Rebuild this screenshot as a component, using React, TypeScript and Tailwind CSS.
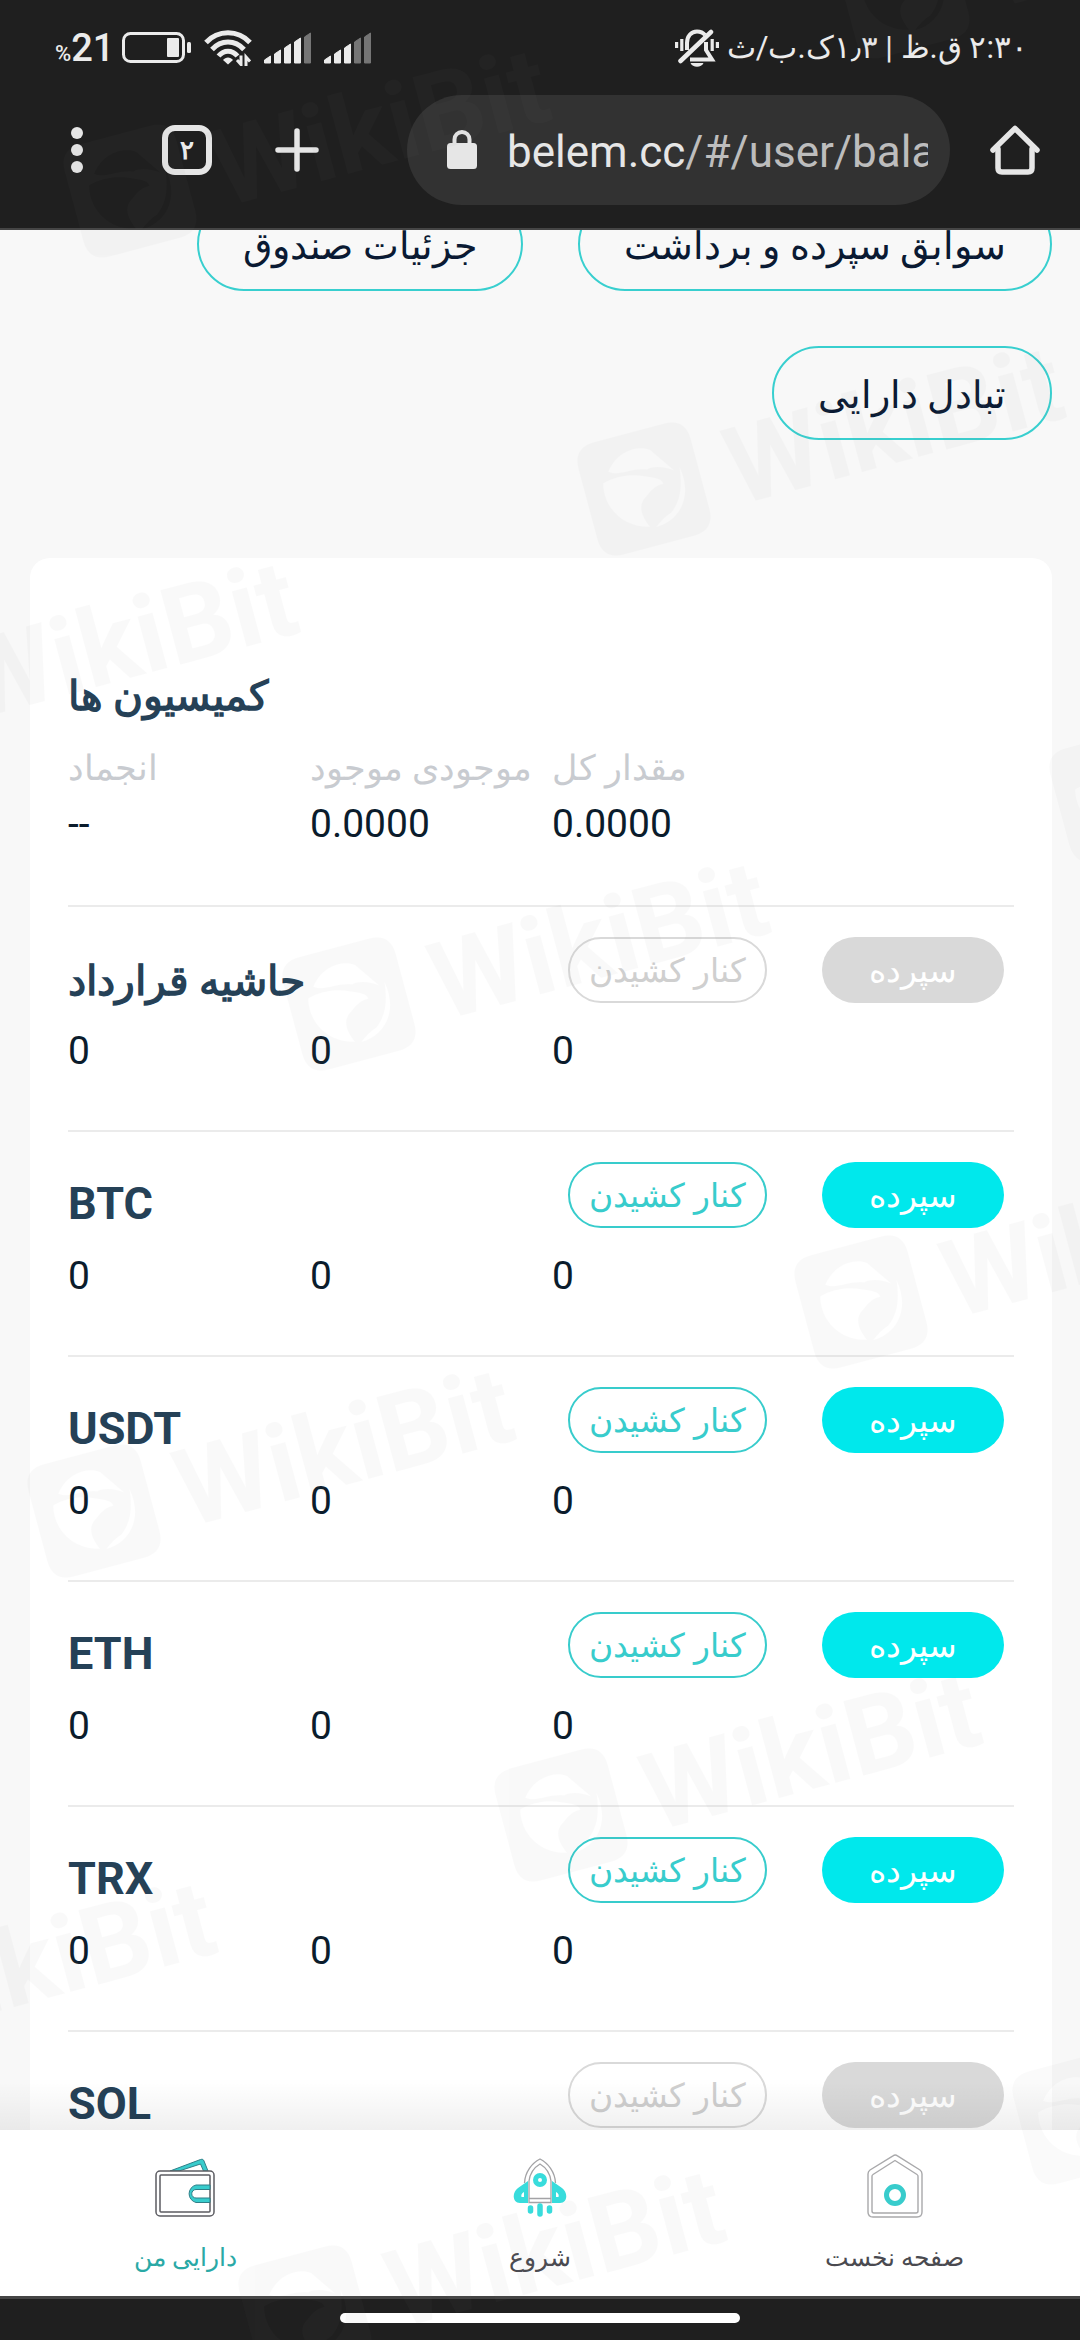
import type { ReactNode } from "react";

type Row = { name: string; rtl?: boolean; enabled: boolean };

const rows: Row[] = [
  { name: "حاشیه قرارداد", rtl: true, enabled: false },
  { name: "BTC", enabled: true },
  { name: "USDT", enabled: true },
  { name: "ETH", enabled: true },
  { name: "TRX", enabled: true },
  { name: "SOL", enabled: false },
];

function BatteryIcon() {
  return (
    <svg width="70" height="32" viewBox="0 0 70 32" fill="none" aria-hidden="true">
      <rect x="1.5" y="1.5" width="60" height="28" rx="7" stroke="#ebebeb" strokeWidth="3" />
      <rect x="45" y="6" width="12" height="19" rx="1" fill="#ebebeb" />
      <rect x="65" y="10" width="4" height="11" rx="1.5" fill="#ebebeb" />
    </svg>
  );
}

function WifiIcon() {
  return (
    <svg width="48" height="36" viewBox="0 0 48 36" fill="none" aria-hidden="true">
      <g stroke="#ebebeb" strokeWidth="5">
        <path d="M2 12.500C14 -.5 34 -.5 46 12.500" />
        <path d="M8 19.500C17 9.500 31 9.500 40 19.500" />
        <path d="M14.500 26C20 19.500 28 19.500 33.500 26" />
      </g>
      <path d="M24 34.500l-5-4.500c2.500-3.500 7.500-3.500 10 0z" fill="#ebebeb" />
      <path d="M33 30l4 4.500v-9M42 36v-9l4 4.500" stroke="#ebebeb" strokeWidth="3" />
    </svg>
  );
}

function SignalIcon({ lit }: { lit: number }) {
  const tops = [24, 18, 12, 6, 1];
  return (
    <svg width="48" height="32" viewBox="0 0 48 32" aria-hidden="true">
      {tops.map((top, i) => (
        <path
          key={top}
          d={`M${i * 10 + 0.5} 31V${top + 4}L${i * 10 + 6.5} ${top}V31Z`}
          fill={i < lit ? "#ebebeb" : "#757575"}
          stroke={i < lit ? "#ebebeb" : "#757575"}
          strokeWidth="1"
          strokeLinejoin="round"
        />
      ))}
    </svg>
  );
}

function MutedBellIcon() {
  return (
    <svg width="44" height="38" viewBox="0 0 44 38" fill="none" aria-hidden="true">
      <g stroke="#ebebeb" strokeWidth="3.200">
        <path d="M1.600 13v6M6.800 10v12M37.200 10v12M42.400 13v6" />
        <path d="M12 21V14c0-6.500 4-11.500 10-11.500 3.500 0 6 1 8 3.500M31 13v8l6 9.500H15" strokeWidth="4" />
        <path d="M5.500 32L36 3" strokeWidth="4.500" strokeLinecap="round" />
      </g>
      <path d="M15.500 34h13c-2 5-11 5-13 0z" fill="#ebebeb" />
    </svg>
  );
}

function WalletIcon() {
  return (
    <svg width="60" height="60" viewBox="0 0 60 60" fill="none" aria-hidden="true">
      <path d="M15 13L45.500 1.500c2-.6 3 0 3.500 1.500L53 13h-4.500l-3-7L24 13z" fill="#38cccc" stroke="#2f7f88" strokeWidth="1" strokeLinejoin="round" />
      <rect x="1" y="13" width="58" height="45" rx="4" fill="#fff" stroke="#5c5c62" strokeWidth="1.500" />
      <rect x="5" y="17" width="50" height="37" rx="1" stroke="#5c5c62" strokeWidth="1.500" />
      <path d="M55 27H41a9 9 0 0 0 0 17.500h14v-4.500H41a4.200 4.200 0 0 1 0-8.500h14z" fill="#38cccc" stroke="#2f7f88" strokeWidth="1" />
    </svg>
  );
}

function RocketIcon() {
  return (
    <svg width="54" height="60" viewBox="0 0 54 60" fill="none" aria-hidden="true">
      <path d="M15 23L5 30c-6 4-6 15 2 15h8zM39 23l10 7c6 4 6 15-2 15h-8z" fill="#38dcdc" />
      <path d="M11 34v5H8.500q-1-3 2.500-5zM43 34v5h2.500q1-3-2.500-5z" fill="#fff" />
      <path d="M16 43V22C17 15 23 9 27 6c4 3 10 9 11 16v21z" fill="#fff" />
      <path d="M11.500 25C12 14 19 5 27 1c8 4 15 13 15.500 24" stroke="#a3a3a6" strokeWidth="1.300" />
      <path d="M16 40.500V23C17 15 22 9 27 6c5 3 10 9 11 17v17.500zM16 40.500v4h22v-4" stroke="#a3a3a6" strokeWidth="1.300" />
      <circle cx="27" cy="22" r="4.500" stroke="#38dcdc" strokeWidth="5" />
      <path d="M27 48v8M17.500 50v3M36.500 50v3" stroke="#38dcdc" strokeWidth="5.500" strokeLinecap="round" />
    </svg>
  );
}

function HomeTabIcon() {
  return (
    <svg width="56" height="64" viewBox="0 0 56 64" fill="none" aria-hidden="true">
      <path d="M26 1.800a4 4 0 0 1 4.500 0L53 16c1.500 1 2 2 2 4v38c0 3-2 5-5 5H6c-3 0-5-2-5-5V20c0-2 .5-3 2-4z" stroke="#a9a9ab" strokeWidth="1.400" />
      <path d="M28 6.500L50 20.500a2 2 0 0 1 1 2V57q0 2-2 2H7q-2 0-2-2V22.500a2 2 0 0 1 1-2z" stroke="#a9a9ab" strokeWidth="1.400" />
      <circle cx="28" cy="41" r="8.500" stroke="#38cccc" strokeWidth="5" />
    </svg>
  );
}

function BrowserHomeIcon() {
  return (
    <svg width="50" height="50" viewBox="0 0 50 50" fill="none" stroke="#e6e6e6" strokeWidth="5.500" strokeLinecap="round" strokeLinejoin="round" aria-hidden="true">
      <path d="M3 25L25 3.500 47 25" />
      <path d="M8 24v19q0 4 4 4h26q4 0 4-4V24" />
    </svg>
  );
}

function LockIcon() {
  return (
    <svg width="30" height="40" viewBox="0 0 30 40" fill="none" aria-hidden="true">
      <path d="M7.500 15V9.500a7.500 7.500 0 0 1 15 0V15" stroke="#e6e6e6" strokeWidth="4" />
      <rect y="13" width="30" height="26" rx="3.500" fill="#e6e6e6" />
    </svg>
  );
}

function Pill({ children }: { children: ReactNode }) {
  return (
    <button type="button" className="flex h-[94px] items-center rounded-full border-2 border-[#38cfcf] px-11 pt-1 text-[38px] leading-none text-[#0a1a33]">
      {children}
    </button>
  );
}

function AssetRow({ row }: { row: Row }) {
  return (
    <section className="flex h-[225px] flex-col border-t-2 border-[#ebebeb]">
      <div className="flex items-start pt-[30px]">
        <h2
          dir={row.rtl ? "rtl" : "ltr"}
          className={
            row.rtl
              ? "pt-5 text-[41px] leading-[48px] font-bold text-[#254157]"
              : "pt-4 text-[45px] leading-[52px] font-bold text-[#254157]"
          }
        >
          {row.name}
        </h2>
        <div className="ml-auto flex gap-[55px] pr-[10px]">
          <button
            type="button"
            disabled={!row.enabled}
            className={
              row.enabled
                ? "h-[66px] w-[199px] rounded-full border-2 border-[#38cccc] text-[33px] leading-none text-[#38cccc]"
                : "h-[66px] w-[199px] rounded-full border-2 border-[#d9d9d9] text-[33px] leading-none text-[#cfcfcf]"
            }
          >
            کنار کشیدن
          </button>
          <button
            type="button"
            disabled={!row.enabled}
            className={
              row.enabled
                ? "h-[66px] w-[182px] rounded-full bg-[#00e8ec] text-[33px] leading-none text-white"
                : "h-[66px] w-[182px] rounded-full bg-[#d9d9d9] text-[33px] leading-none text-white"
            }
          >
            سپرده
          </button>
        </div>
      </div>
      <div className="mt-[22px] flex text-[39px] leading-[48px] text-[#0b1c2c]">
        <span className="w-[242px]">0</span>
        <span className="w-[242px]">0</span>
        <span className="w-[242px]">0</span>
      </div>
    </section>
  );
}

const marks = [
  [130, 191], [644, 489], [-122, 704], [349, 1004], [861, 1302], [94, 1511],
  [561, 1815], [-204, 2024], [305, 2312], [903, -8], [1116, 795], [1079, 2118],
];

function Watermark() {
  return (
    <svg className="pointer-events-none absolute inset-0 h-full w-full overflow-hidden" aria-hidden="true">
      {marks.map(([x, y]) => (
        <g key={`${x}-${y}`} transform={`translate(${x} ${y}) rotate(-15)`} fill="#808080" opacity="0.04">
          <path
            fillRule="evenodd"
            d="M-36 -58H36Q58 -58 58 -36V36Q58 58 36 58H-36Q-58 58 -58 36V-36Q-58 -58 -36 -58ZM-30 -26C-16 -44 6 -44 16 -36L34 -10C26 -16 16 -20 8 -18C-8 -24 -20 -18 -30 -26ZM-38 -16C-24 -20 -8 -18 4 -12C12 -8 20 -6 20 0C10 0 6 4 0 8C-10 14 -10 24 -4 38C-30 32 -44 8 -38 -16ZM40 -12C46 20 26 40 2 40C10 34 14 32 20 30C34 20 38 4 40 -12Z"
          />
          <text x="86" y="40" fontSize="108" className="font-[Roboto] font-bold">
            WikiBit
          </text>
        </g>
      ))}
    </svg>
  );
}

export default function App() {
  return (
    <div className="relative flex h-screen flex-col overflow-hidden bg-[#f8f8f8] font-[Roboto,sans-serif]">
      <header className="shrink-0 border-b-2 border-[#454545] bg-[#1f1f1f] text-[#ebebeb]">
        <div className="flex h-[95px] items-center justify-between pr-[52px] pl-[55px]">
          <div className="flex items-center">
            <span className="text-[22px] leading-none font-medium">
              %<span className="text-[38px]">21</span>
            </span>
            <div className="ml-2 flex items-center gap-3">
              <BatteryIcon />
              <WifiIcon />
              <SignalIcon lit={4} />
              <SignalIcon lit={3} />
            </div>
          </div>
          <div dir="rtl" className="flex items-center gap-2 text-[31px] leading-none">
            <span>۲:۳۰ ق.ظ | ۱٫۳ک.ب/ث</span>
            <MutedBellIcon />
          </div>
        </div>
        <div className="flex h-[133px] items-start">
          <button type="button" aria-label="منو" className="mt-8 ml-[71px] flex h-[46px] w-3 flex-col justify-between">
            <span className="size-3 rounded-full bg-[#e6e6e6]" />
            <span className="size-3 rounded-full bg-[#e6e6e6]" />
            <span className="size-3 rounded-full bg-[#e6e6e6]" />
          </button>
          <button type="button" className="mt-[30px] ml-[79px] flex size-[50px] items-center justify-center rounded-[13px] border-[6px] border-[#e6e6e6] text-[26px] leading-none font-bold">
            ۲
          </button>
          <button type="button" aria-label="زبانه جدید" className="mt-[33px] ml-[63px]">
            <svg width="44" height="44" viewBox="0 0 44 44" stroke="#e6e6e6" strokeWidth="5.500" strokeLinecap="round" aria-hidden="true">
              <path d="M22 3v38M3 22h38" />
            </svg>
          </button>
          <div className="ml-[88px] flex h-[110px] min-w-0 flex-1 items-center rounded-full bg-[#323232] pr-[22px] pl-10">
            <LockIcon />
            <a href="#/user/balance" className="ml-[30px] min-w-0 flex-1 overflow-hidden pt-1 text-[44px] leading-[60px] whitespace-nowrap text-[#bdbdbd]">
              <span className="text-[#e6e6e6]">belem.cc</span>/#/user/balance
            </a>
          </div>
          <button type="button" aria-label="خانه" className="mt-[30px] mr-10 ml-10">
            <BrowserHomeIcon />
          </button>
        </div>
      </header>

      <main className="min-h-0 flex-1 overflow-hidden pr-7 pl-[30px]">
        <nav dir="rtl" className="-mt-[33px] flex flex-wrap gap-[55px]">
          <Pill>سوابق سپرده و برداشت</Pill>
          <Pill>جزئیات صندوق</Pill>
          <Pill>تبادل دارایی</Pill>
        </nav>

        <div className="mt-[118px] rounded-[20px] bg-white px-[38px] pt-[108px]">
          <section className="flex h-[239px] flex-col">
            <h2 dir="rtl" className="self-start text-[41px] leading-[60px] font-bold text-[#254157]">
              کمیسیون ها
            </h2>
            <table className="mt-4 w-[726px] table-fixed text-left">
              <thead>
                <tr className="text-[35px] leading-[54px] text-[#c8cbd0]">
                  <th className="p-0 font-normal whitespace-nowrap">انجماد</th>
                  <th className="p-0 font-normal whitespace-nowrap">موجودی موجود</th>
                  <th className="p-0 font-normal whitespace-nowrap">مقدار کل</th>
                </tr>
              </thead>
              <tbody>
                <tr className="text-[39px] leading-[56px] text-[#0b1c2c]">
                  <td className="p-0">--</td>
                  <td className="p-0">0.0000</td>
                  <td className="p-0">0.0000</td>
                </tr>
              </tbody>
            </table>
          </section>
          {rows.map((row) => (
            <AssetRow key={row.name} row={row} />
          ))}
        </div>
      </main>

      <nav className="relative flex shrink-0 bg-white px-2 text-[25px] leading-[40px] text-[#4a4a50]">
        <div className="pointer-events-none absolute inset-x-0 bottom-full h-12 bg-linear-to-t from-black/6 to-transparent" />
        <a href="#/assets" className="flex h-[166px] flex-1 flex-col items-center text-[#2aa9a6]">
          <span className="flex h-[88px] items-end">
            <WalletIcon />
          </span>
          <span className="mt-5">دارایی من</span>
        </a>
        <a href="#/start" className="flex h-[166px] flex-1 flex-col items-center">
          <span className="flex h-[88px] items-end">
            <RocketIcon />
          </span>
          <span className="mt-5">شروع</span>
        </a>
        <a href="#/home" className="flex h-[166px] flex-1 flex-col items-center">
          <span className="flex h-[88px] items-end">
            <HomeTabIcon />
          </span>
          <span className="mt-5">صفحه نخست</span>
        </a>
      </nav>

      <footer className="flex h-11 shrink-0 justify-center border-t-3 border-[#454545] bg-[#1f1f1f] pt-[14px]">
        <div className="h-[10px] w-[400px] rounded-full bg-white" />
      </footer>
      <Watermark />
    </div>
  );
}
